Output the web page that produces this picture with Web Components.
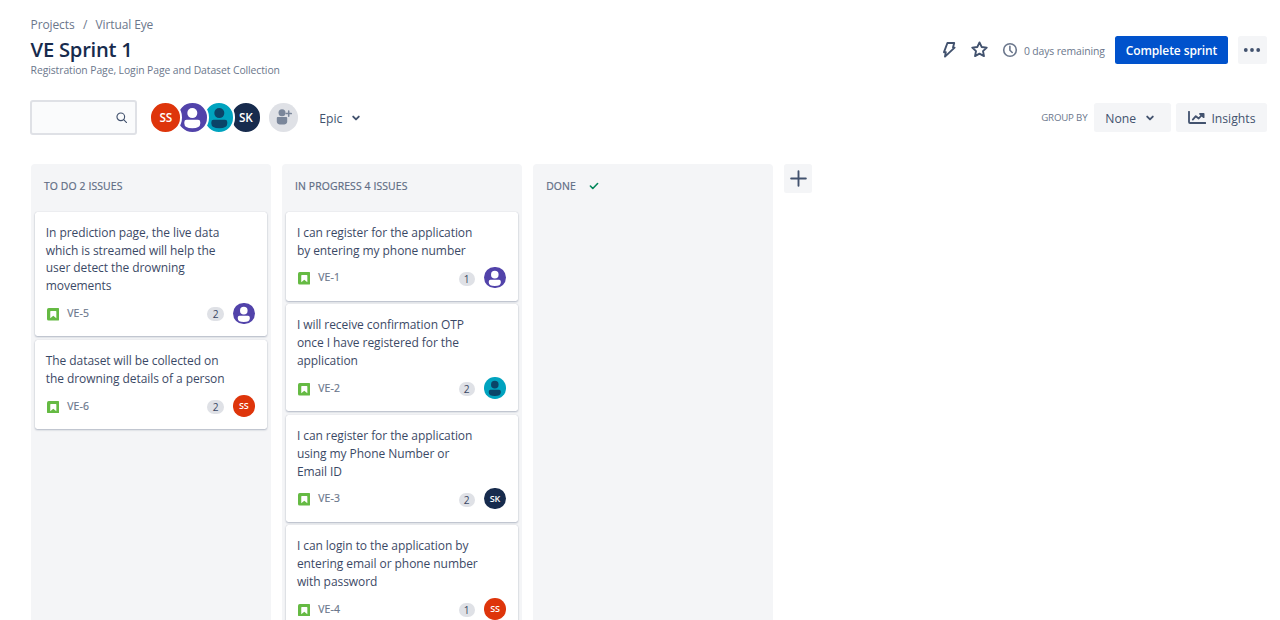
<!DOCTYPE html>
<html lang="en">
<head>
<meta charset="utf-8">
<title>VE Sprint 1</title>
<style>
html,body{margin:0;height:100%;overflow:hidden;background:#fff}
body{font-family:"Open Sans","Noto Sans",sans-serif;color:#172b4d}
</style>
</head>
<body>
<sprint-page></sprint-page>
<script>
const define = (name, html, setup) => {
  const tpl = document.createElement('template');
  tpl.innerHTML = html;
  customElements.define(name, class extends HTMLElement {
    connectedCallback() {
      if (this.shadowRoot) return;
      const root = this.attachShadow({mode: 'open'});
      root.append(tpl.content.cloneNode(true));
      if (setup) setup(this, root);
    }
  });
};

const ICONS = {
  search: ['0 0 12 12', '<circle cx="5" cy="5" r="4"/><path d="M8 8l3.2 3.2"/>', 1.2],
  chevron: ['0 0 10 10', '<path d="M2.2 3.6L5 6.4l2.8-2.8"/>', 1.9],
  bolt: ['0 0 14 18', '<path d="M5.4 2h6.8L11 6.6h1.6L3 15.6l.8-4.4H2z"/>', 1.9],
  star: ['0 0 16 16', '<path d="M8 1.3l2 4.3 4.8.6-3.5 3.3.9 4.7L8 11.9l-4.2 2.3.9-4.7L1.2 6.2 6 5.6z"/>', 1.8],
  clock: ['0 0 16 16', '<circle cx="8" cy="8" r="6.3"/><path d="M7.9 4.2v4l2.3 2.3"/>', 1.6],
  dots: ['0 0 18 6', '<g fill="currentColor" stroke="none"><circle cx="2.8" cy="3" r="1.9"/><circle cx="9" cy="3" r="1.9"/><circle cx="15.2" cy="3" r="1.9"/></g>', 0],
  chart: ['0 0 18 14', '<path d="M1 .8v10.2q0 1 1 1h15.3"/><path d="M4.8 8.6l3-3.4 2.9 2.3L14.4 3.4"/><path d="M12 2.8h3.6v3.4z" fill="currentColor"/>', 1.8],
  plus: ['0 0 18 18', '<path d="M9 1.2v15.6M1.2 9h15.6"/>', 2],
  check: ['0 0 10 10', '<path d="M1.4 5l2.4 2.5 4.8-5"/>', 1.6],
  story: ['0 0 12 12', '<rect width="12" height="12" rx="1.6" fill="#65ba43" stroke="none"/><path fill="#fff" stroke="none" d="M3.7 2.8h4.6q.6 0 .6.6v6.4L6 7.5 3.1 9.8V3.4q0-.6.6-.6z"/>', 0],
  addperson: ['0 0 18 18', '<g fill="currentColor" stroke="none"><circle cx="8" cy="4.7" r="3.5"/><path d="M2.8 10q0-.9.9-.9h8.6q.9 0 .9.9v3.7q0 2.9-5.2 2.9t-5.2-2.9z"/></g><path d="M14.7 3v5.2M12.1 5.6h5.2"/>', 1.5],
};
define('ui-icon', `<style>:host{display:block;flex:none}svg{display:block;width:100%;height:100%}</style>
<svg fill="none" stroke="currentColor" stroke-linecap="round" stroke-linejoin="round"></svg>`, (el, r) => {
  const [box, body, width] = ICONS[el.getAttribute('name')];
  const s = r.querySelector('svg');
  s.setAttribute('viewBox', box);
  s.setAttribute('stroke-width', width);
  s.innerHTML = body;
});

const PEOPLE = {
  SS: ['#de350b'], SK: ['#172b4d'],
  purple: ['#5243aa', '#fff'], teal: ['#00a3bf', '#0b4468'],
};
define('user-avatar', `<style>
:host{display:grid;place-items:center;flex:none;box-sizing:border-box;width:21.6px;height:21.6px;border-radius:50%;overflow:hidden;color:#fff;font-size:9px;font-weight:600;letter-spacing:-.2px;line-height:1}
svg{display:block;width:100%;height:100%}</style>`, (el, r) => {
  const who = el.getAttribute('who'), [bg, fg] = PEOPLE[who];
  el.style.background = bg;
  const body = document.createElement('div');
  body.style.display = 'contents';
  body.innerHTML = fg
    ? `<svg viewBox="0 0 28 28" fill="${fg}"><circle cx="14" cy="9.9" r="4.9"/><path d="M6.2 18.7q0-2.2 2.2-2.2h11.2q2.2 0 2.2 2.2v1.4q0 4.6-7.8 4.6t-7.8-4.6z"/></svg>`
    : `<span>${who}</span>`;
  r.append(body);
});

define('ui-button', `<style>
:host{display:inline-flex;align-items:center;justify-content:center;box-sizing:border-box;height:28.5px;padding:2px 10.5px 0;border-radius:2.5px;background:#f4f5f7;color:#42526e;font-size:12.2px;font-weight:500;white-space:nowrap;flex:none}
:host([primary]){background:#0052cc;color:#fff;font-weight:600;font-size:12px;letter-spacing:-.1px}
:host([square]){width:28.5px;padding:0}
</style><slot></slot>`);

define('issue-card', `<style>
:host{display:block;box-sizing:border-box;width:232px;padding:12.2px 12.4px 12.2px 10.8px;background:#fff;border-radius:2.5px;box-shadow:0 1px 2px rgba(9,30,66,.27),0 0 1px rgba(9,30,66,.2)}
p{margin:0;width:183.5px;font-size:12px;line-height:17.86px;letter-spacing:-.07px;color:#172b4d;opacity:.86}
footer{display:flex;align-items:center;height:21.6px;margin-top:7.4px}
ui-icon{width:12.6px;height:12.6px;margin:2.2px 7.8px 0 1px}
.key{font-size:10.4px;font-weight:500;color:#6b778c;letter-spacing:.15px;line-height:14px;margin-top:-.6px;-webkit-text-stroke:.2px #6b778c}
.pts{margin:2.2px 9.2px 0 auto;width:16.4px;height:14px;border-radius:7px;background:#dfe1e6;font-size:10.2px;line-height:14.4px;text-align:center;color:#172b4d}
.pts span{opacity:.85}
</style><p><slot></slot></p>
<footer><ui-icon name="story"></ui-icon><span class="key"></span><span class="pts"><span></span></span></footer>`, (el, r) => {
  r.querySelector('.key').textContent = el.getAttribute('key');
  r.querySelector('.pts span').textContent = el.getAttribute('points');
  const a = document.createElement('user-avatar');
  a.setAttribute('who', el.getAttribute('who'));
  r.querySelector('footer').append(a);
});

define('board-column', `<style>
:host{display:flex;flex-direction:column;box-sizing:border-box;width:240.6px;flex:none;min-height:0;background:#f4f5f7;border-radius:4px 4px 0 0;padding:0 4.4px}
header{display:flex;flex:none;align-items:center;height:43.4px;padding:0 9px;margin-bottom:4px;font-size:10.4px;font-weight:500;letter-spacing:.12px;color:#5e6c84;-webkit-text-stroke:.2px #5e6c84}
.list{display:flex;flex-direction:column;gap:3.5px}
</style><header><slot name="title"></slot></header><div class="list"><slot></slot></div>`);

define('page-header', `<style>
:host{display:flex;justify-content:space-between;height:78px;white-space:nowrap}
nav{display:flex;gap:8.4px;font-size:12px;line-height:18px;padding-top:.7px;color:#6b778c;letter-spacing:-.12px}
h1{margin:1.7px 0 0;font-size:20.2px;font-weight:600;line-height:28px;letter-spacing:-.24px;color:#172b4d}
p{margin:-.6px 0 0;font-size:10.4px;line-height:14px;letter-spacing:-.09px;color:#6b778c}
.actions{display:flex;align-items:center;height:28.5px;margin-top:20.6px;color:#42526e}
.time{font-size:10.4px;color:#6b778c;letter-spacing:-.12px;margin:2px 10.5px 0 6px}
</style>
<div><nav><span>Projects</span><span>/</span><span>Virtual Eye</span></nav>
<h1>VE Sprint 1</h1><p>Registration Page, Login Page and Dataset Collection</p></div>
<div class="actions">
<ui-icon name="bolt" style="width:14px;height:18px;margin-right:15px"></ui-icon>
<ui-icon name="star" style="width:17px;height:17px;margin-right:14px"></ui-icon>
<ui-icon name="clock" style="width:16px;height:16px;color:#6b778c"></ui-icon>
<span class="time">0 days remaining</span>
<ui-button primary style="width:112.5px;margin-right:10.5px">Complete sprint</ui-button>
<ui-button square><ui-icon name="dots" style="width:18px;height:6px"></ui-icon></ui-button>
</div>`);

define('board-toolbar', `<style>
:host{display:flex;align-items:center;height:35.5px;white-space:nowrap}
.search{display:flex;align-items:center;justify-content:flex-end;box-sizing:border-box;width:107px;height:35px;margin-left:-.3px;border:2px solid #dfe1e6;border-radius:3px;background:#fafbfc;padding-right:8px;color:#42526e}
.people{display:flex;margin-left:12.2px}
.people user-avatar{width:32.6px;height:32.6px;border:2px solid #fff;font-size:11.8px;margin-right:-5.9px;position:relative}
.add{display:grid;place-items:center;width:28.6px;height:28.6px;border-radius:50%;background:#dfe1e6;color:#7a869a;margin-left:12.8px}
.epic{display:flex;align-items:center;gap:8.6px;margin-left:21.5px;font-size:12.2px;font-weight:500;color:#42526e;padding-top:1.6px}
.group{margin-left:auto;font-size:9.7px;color:#6b778c;letter-spacing:-.18px;margin-right:6.6px}
</style>
<div class="search"><ui-icon name="search" style="width:11.5px;height:11.5px"></ui-icon></div>
<div class="people">
<user-avatar who="SS" style="z-index:4"></user-avatar><user-avatar who="purple" style="z-index:3"></user-avatar><user-avatar who="teal" style="z-index:2"></user-avatar><user-avatar who="SK" style="z-index:1"></user-avatar></div>
<div class="add"><ui-icon name="addperson" style="width:18px;height:18px"></ui-icon></div>
<div class="epic">Epic<ui-icon name="chevron" style="width:10px;height:10px"></ui-icon></div>
<span class="group">GROUP BY</span>
<ui-button style="width:77px;margin-right:5.2px;padding-right:15px">None<ui-icon name="chevron" style="width:10px;height:10px;margin-left:9px"></ui-icon></ui-button>
<ui-button style="width:90.5px"><ui-icon name="chart" style="width:18px;height:14px;margin:-1.5px 5px 0 1px"></ui-icon>Insights</ui-button>`);

define('sprint-page', `<style>
:host{display:flex;flex-direction:column;box-sizing:border-box;height:100vh;padding:15px 13.3px 0 30.6px;overflow:hidden}
page-header{margin-bottom:6.7px;flex:none}
board-toolbar{flex:none}
.board{display:flex;align-items:stretch;gap:10.5px;margin-top:29px;flex:1;min-height:0}
.board ui-button{align-self:flex-start}
.done{display:flex;align-items:center;gap:13px}
.done ui-icon{width:10px;height:10px;color:#00875a}
</style>
<page-header></page-header>
<board-toolbar></board-toolbar>
<div class="board">
<board-column><span slot="title">TO DO 2 ISSUES</span>
<issue-card key="VE-5" points="2" who="purple">In prediction page, the live data which is streamed will help the user detect the drowning movements</issue-card>
<issue-card key="VE-6" points="2" who="SS">The dataset will be collected on the drowning details of a person</issue-card>
</board-column>
<board-column><span slot="title">IN PROGRESS 4 ISSUES</span>
<issue-card key="VE-1" points="1" who="purple">I can register for the application by entering my phone number</issue-card>
<issue-card key="VE-2" points="2" who="teal">I will receive confirmation OTP once I have registered for the application</issue-card>
<issue-card key="VE-3" points="2" who="SK">I can register for the application using my Phone Number or Email ID</issue-card>
<issue-card key="VE-4" points="1" who="SS">I can login to the application by entering email or phone number with password</issue-card>
</board-column>
<board-column><span slot="title" class="done">DONE<ui-icon name="check"></ui-icon></span></board-column>
<ui-button square><ui-icon name="plus" style="width:17px;height:17px"></ui-icon></ui-button>
</div>`);
</script>
</body>
</html>
